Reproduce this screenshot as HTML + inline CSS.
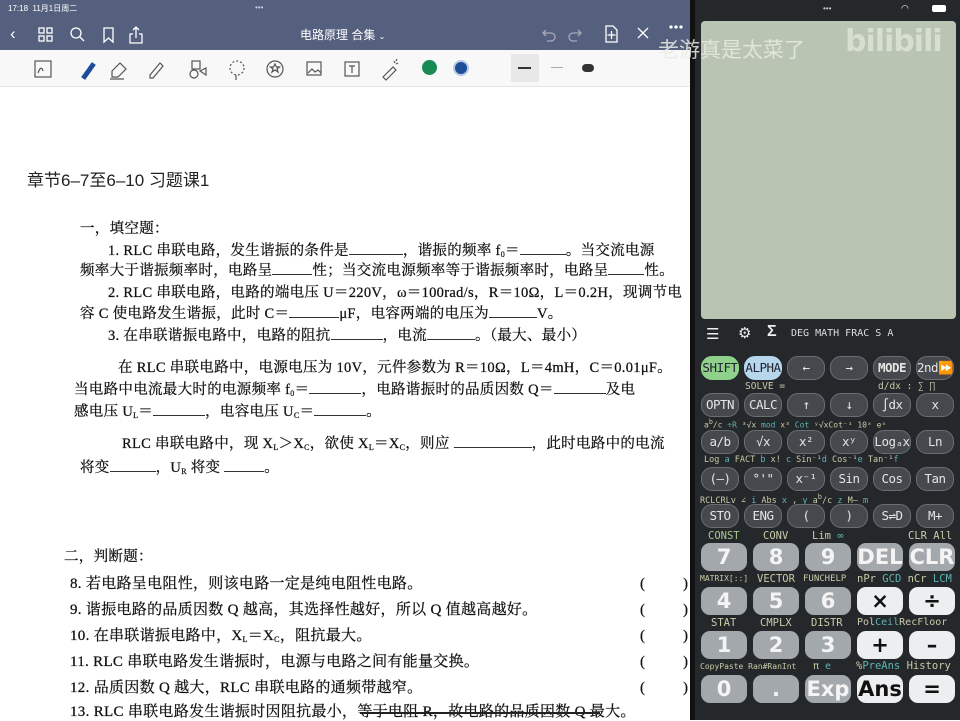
<!DOCTYPE html>
<html><head><meta charset="utf-8"><style>
*{margin:0;padding:0;box-sizing:border-box}
body{width:960px;height:720px;overflow:hidden;position:relative;background:#fff;font-family:"Liberation Sans","Noto Sans CJK SC",sans-serif}
.a{position:absolute;white-space:nowrap}
.t{position:absolute;white-space:nowrap;font:14.5px "Liberation Serif","Noto Serif CJK SC",serif;color:#111;letter-spacing:0.3px;line-height:18px;-webkit-text-stroke:0.25px #111}
.t sub{font-size:8px;line-height:0;vertical-align:-2px}
.u{display:inline-block;border-bottom:1px solid #333;height:12px;vertical-align:baseline}
.k{position:absolute;width:38px;height:24px;border-radius:11px;background:#45494d;border:1px solid #6a6e72;color:#e4e4e4;font:12.5px "DejaVu Sans Mono",monospace;text-align:center;line-height:22px;overflow:hidden;letter-spacing:-0.5px}
.n{position:absolute;width:46px;height:28px;border-radius:9px;background:#a3a8ad;color:#f4f4f4;font:bold 21px "DejaVu Sans",sans-serif;text-align:center;line-height:28px}
.o{background:#eceef0;color:#111}
.l{position:absolute;font:9.5px "DejaVu Sans Mono",monospace;color:#c9cba8;white-space:nowrap}
.c{color:#5fb3b3}
</style></head><body>
<div class="a" style="left:0;top:0;width:690px;height:50px;background:#55607f"></div>
<div class="a" style="left:8px;top:3px;font-size:8px;color:#fff">17:18 &nbsp;11月1日周二</div>
<div class="a" style="left:255px;top:3px;font-size:8px;color:#ccd">•••</div>
<div class="a" style="left:10px;top:24px;font-size:17px;color:#fff">‹</div>
<svg class="a" style="left:38px;top:26px" width="120" height="18" fill="none" stroke="#fff" stroke-width="1.3">
<rect x="1" y="2" width="5" height="5"/><rect x="9" y="2" width="5" height="5"/><rect x="1" y="10" width="5" height="5"/><rect x="9" y="10" width="5" height="5"/>
<circle cx="38" cy="7" r="5"/><path d="M42 11l4 4"/>
<path d="M66 2h9v14l-4.5-4-4.5 4z"/>
<path d="M95 8h-3v9h12v-9h-3M98 12V1M95 4l3-3 3 3"/></svg>
<div class="a" style="left:300px;top:26px;font-size:12px;color:#fff">电路原理 合集 <span style="font-size:8px">⌄</span></div>
<svg class="a" style="left:540px;top:24px" width="150" height="20" fill="none" stroke="#fff" stroke-width="1.3">
<path d="M6 6l-3 3 3 3M3 9h8a4 4 0 010 8H7" stroke="#aab"/><path d="M38 6l3 3-3 3M41 9h-8a4 4 0 000 8h4" stroke="#aab"/>
<path d="M66 2h7l4 4v12H66z M71.5 7v8M67.5 11h8"/><path d="M98 4l10 10M108 4L98 14"/><circle cx="131" cy="3" r="1" fill="#fff"/><circle cx="136" cy="3" r="1" fill="#fff"/><circle cx="141" cy="3" r="1" fill="#fff"/></svg>
<div class="a" style="left:0;top:50px;width:690px;height:37px;background:#f8f8f8;border-bottom:1px solid #e4e4e4"></div>
<svg class="a" style="left:30px;top:55px" width="580" height="28" fill="none" stroke="#555" stroke-width="1.2">
<rect x="5" y="6" width="16" height="16"/><path d="M8 18c2-6 4-6 5-2"/>
<path d="M52 22l10-14 3 2-10 14z" fill="#1e4c9a" stroke="#1e4c9a"/>
<path d="M82 16l8-8 6 6-8 8h-6z M80 24h14"/>
<path d="M120 20l10-12 3 3-10 12h-3z"/>
<rect x="162" y="6" width="8" height="8"/><circle cx="164" cy="19" r="4"/><path d="M170 16l6-3v7z"/>
<circle cx="207" cy="13" r="7" stroke-dasharray="2 2"/><path d="M206 20v5"/>
<circle cx="245" cy="14" r="8"/><path d="M245 9l1.5 3h3l-2.5 2 1 3-3-2-3 2 1-3-2.5-2h3z"/>
<rect x="277" y="7" width="14" height="13"/><path d="M278 18l4-4 3 3 3-2 3 3"/>
<rect x="315" y="7" width="14" height="14"/><path d="M319 11h6M322 11v7"/>
<path d="M353 22l10-10 3 3-10 10z M364 6l1 2M368 8l-2 1M367 4l-1 2"/></svg>
<div class="a" style="left:422px;top:60px;width:15px;height:15px;border-radius:50%;background:#178a55"></div>
<div class="a" style="left:453px;top:60px;width:16px;height:16px;border-radius:50%;background:#1f4e98;border:2px solid #b8c8e8"></div>
<div class="a" style="left:511px;top:54px;width:28px;height:28px;background:#e8e8e8"></div>
<div class="a" style="left:518px;top:67px;width:13px;height:2px;background:#333"></div>
<div class="a" style="left:551px;top:67px;width:12px;height:1px;background:#aaa"></div>
<div class="a" style="left:582px;top:64px;width:12px;height:8px;border-radius:4px;background:#333"></div>
<div class="a" style="left:27px;top:166px;font-size:17px;color:#222">章节6–7至6–10 习题课1</div>
<div class="t" style="left:80px;top:220px">一，填空题：</div>
<div class="t" style="left:108px;top:242px">1. RLC 串联电路，发生谐振的条件是<span class="u" style="width:54px"></span>，谐振的频率 f<sub>0</sub>＝<span class="u" style="width:46px"></span>。当交流电源</div>
<div class="t" style="left:80px;top:262px">频率大于谐振频率时，电路呈<span class="u" style="width:40px"></span>性；当交流电源频率等于谐振频率时，电路呈<span class="u" style="width:36px"></span>性。</div>
<div class="t" style="left:108px;top:284px">2. RLC 串联电路，电路的端电压 U＝220V，ω＝100rad/s，R＝10Ω，L＝0.2H，现调节电</div>
<div class="t" style="left:80px;top:305px">容 C 使电路发生谐振，此时 C＝<span class="u" style="width:50px"></span>μF，电容两端的电压为<span class="u" style="width:48px"></span>V。</div>
<div class="t" style="left:108px;top:327px">3. 在串联谐振电路中，电路的阻抗<span class="u" style="width:52px"></span>，电流<span class="u" style="width:48px"></span>。（最大、最小）</div>
<div class="t" style="left:118px;top:359px">在 RLC 串联电路中，电源电压为 10V，元件参数为 R＝10Ω，L＝4mH，C＝0.01μF。</div>
<div class="t" style="left:74px;top:381px">当电路中电流最大时的电源频率 f<sub>0</sub>＝<span class="u" style="width:52px"></span>，电路谐振时的品质因数 Q＝<span class="u" style="width:52px"></span>及电</div>
<div class="t" style="left:74px;top:403px">感电压 U<sub>L</sub>＝<span class="u" style="width:52px"></span>，电容电压 U<sub>C</sub>＝<span class="u" style="width:52px"></span>。</div>
<div class="t" style="left:122px;top:435px">RLC 串联电路中，现 X<sub>L</sub>＞X<sub>C</sub>，欲使 X<sub>L</sub>＝X<sub>C</sub>，则应 <span class="u" style="width:78px"></span>，此时电路中的电流</div>
<div class="t" style="left:80px;top:459px">将变<span class="u" style="width:46px"></span>，U<sub>R</sub> 将变 <span class="u" style="width:40px"></span>。</div>
<div class="t" style="left:64px;top:548px">二，判断题：</div>
<div class="t" style="left:70px;top:575px;font-size:15px">8. 若电路呈电阻性，则该电路一定是纯电阻性电路。</div>
<div class="t" style="left:70px;top:601px;font-size:15px">9. 谐振电路的品质因数 Q 越高，其选择性越好，所以 Q 值越高越好。</div>
<div class="t" style="left:70px;top:627px;font-size:15px">10. 在串联谐振电路中，X<sub>L</sub>＝X<sub>C</sub>，阻抗最大。</div>
<div class="t" style="left:70px;top:653px;font-size:15px">11. RLC 串联电路发生谐振时，电源与电路之间有能量交换。</div>
<div class="t" style="left:70px;top:679px;font-size:15px">12. 品质因数 Q 越大，RLC 串联电路的通频带越窄。</div>
<div class="t" style="left:70px;top:703px;font-size:15px">13. RLC 串联电路发生谐振时因阻抗最小，等于电阻 R，故电路的品质因数 Q 最大。</div>
<div class="a" style="left:360px;top:712px;width:240px;height:2px;background:#222"></div>
<div class="t" style="left:640px;top:575px;font-size:15px">(</div><div class="t" style="left:683px;top:575px;font-size:15px">)</div>
<div class="t" style="left:640px;top:601px;font-size:15px">(</div><div class="t" style="left:683px;top:601px;font-size:15px">)</div>
<div class="t" style="left:640px;top:627px;font-size:15px">(</div><div class="t" style="left:683px;top:627px;font-size:15px">)</div>
<div class="t" style="left:640px;top:653px;font-size:15px">(</div><div class="t" style="left:683px;top:653px;font-size:15px">)</div>
<div class="t" style="left:640px;top:679px;font-size:15px">(</div><div class="t" style="left:683px;top:679px;font-size:15px">)</div>
<div class="a" style="left:690px;top:0;width:270px;height:720px;background:#25282b"></div>
<div class="a" style="left:690px;top:0;width:5px;height:720px;background:#111"></div>
<div class="a" style="left:823px;top:4px;font-size:8px;color:#ccc">•••</div>
<div class="a" style="left:932px;top:5px;width:14px;height:7px;border:1px solid #fff;border-radius:2px;background:#fff"></div>
<div class="a" style="left:901px;top:3px;font-size:9px;color:#fff">◠</div>
<div class="a" style="left:701px;top:21px;width:255px;height:298px;background:#bac4b2;border-radius:4px"></div>
<div class="a" style="left:658px;top:34px;font-size:21px;color:#e8ece4;opacity:.85">老游真是太菜了</div>
<div class="a" style="left:845px;top:24px;font:bold 30px 'DejaVu Sans',sans-serif;color:#dde4d8;opacity:.85;letter-spacing:-1px">bilibili</div>
<div class="a" style="left:706px;top:325px;font-size:15px;color:#eee">☰</div>
<div class="a" style="left:738px;top:324px;font-size:15px;color:#eee">⚙</div>
<div class="a" style="left:767px;top:323px;font-size:16px;color:#eee;font-weight:bold">Σ</div>
<div class="a" style="left:791px;top:328px;font:10px 'DejaVu Sans Mono',monospace;color:#ddd">DEG MATH FRAC S A</div>
<div class="k" style="left:701px;top:356px;background:#8fd08a;color:#223;border-color:#8fd08a">SHIFT</div>
<div class="k" style="left:744px;top:356px;background:#b6d6ec;color:#223;border-color:#b6d6ec">ALPHA</div>
<div class="k" style="left:787px;top:356px">←</div>
<div class="k" style="left:830px;top:356px">→</div>
<div class="k" style="left:873px;top:356px;font-weight:bold">MODE</div>
<div class="k" style="left:916px;top:356px">2nd⏩</div>
<div class="l" style="left:745px;top:381px">SOLVE =</div><div class="l" style="left:878px;top:381px">d/dx : ∑  ∏</div>
<div class="k" style="left:701px;top:393px">OPTN</div><div class="k" style="left:744px;top:393px">CALC</div><div class="k" style="left:787px;top:393px">↑</div><div class="k" style="left:830px;top:393px">↓</div><div class="k" style="left:873px;top:393px">∫dx</div><div class="k" style="left:916px;top:393px">x</div>
<div class="l" style="left:704px;top:418px;font-size:8px">a<sup>b</sup>/c <span class="c">÷R</span> ³√x <span class="c">mod</span> x³ <span class="c">Cot</span> ʸ√xCot⁻¹  10ˣ   eˣ</div>
<div class="k" style="left:701px;top:430px">a/b</div><div class="k" style="left:744px;top:430px">√x</div><div class="k" style="left:787px;top:430px">x²</div><div class="k" style="left:830px;top:430px">xʸ</div><div class="k" style="left:873px;top:430px">Logₐx</div><div class="k" style="left:916px;top:430px">Ln</div>
<div class="l" style="left:704px;top:455px;font-size:8.5px">Log <span class="c">a</span> FACT <span class="c">b</span> x! <span class="c">c</span> Sin⁻¹<span class="c">d</span> Cos⁻¹<span class="c">e</span> Tan⁻¹<span class="c">f</span></div>
<div class="k" style="left:701px;top:467px">(–)</div><div class="k" style="left:744px;top:467px">°'"</div><div class="k" style="left:787px;top:467px">x⁻¹</div><div class="k" style="left:830px;top:467px">Sin</div><div class="k" style="left:873px;top:467px">Cos</div><div class="k" style="left:916px;top:467px">Tan</div>
<div class="l" style="left:700px;top:492px;font-size:8.5px">RCLCRLv ∠ <span class="c">i</span> Abs <span class="c">x</span> , <span class="c">y</span>  a<sup>b</sup>/c <span class="c">z</span> M– <span class="c">m</span></div>
<div class="k" style="left:701px;top:504px">STO</div><div class="k" style="left:744px;top:504px">ENG</div><div class="k" style="left:787px;top:504px">(</div><div class="k" style="left:830px;top:504px">)</div><div class="k" style="left:873px;top:504px">S⇌D</div><div class="k" style="left:916px;top:504px">M+</div>
<div class="l" style="left:708px;top:530px;font-size:10.5px;color:#a8c890">CONST</div><div class="l" style="left:763px;top:530px;font-size:10.5px">CONV</div><div class="l" style="left:812px;top:530px;font-size:10.5px">Lim <span class="c">∞</span></div><div class="l" style="left:908px;top:530px;font-size:10.5px">CLR All</div>
<div class="n" style="left:701px;top:543px">7</div><div class="n" style="left:753px;top:543px">8</div><div class="n" style="left:805px;top:543px">9</div><div class="n" style="left:857px;top:543px">DEL</div><div class="n" style="left:909px;top:543px">CLR</div>
<div class="l" style="left:700px;top:574px;font-size:8px">MATRIX[::]</div><div class="l" style="left:757px;top:573px;font-size:10.5px">VECTOR</div><div class="l" style="left:803px;top:574px;font-size:9px">FUNCHELP</div><div class="l" style="left:857px;top:573px;font-size:10.5px">nPr <span class="c">GCD</span> nCr <span class="c">LCM</span></div>
<div class="n" style="left:701px;top:587px">4</div><div class="n" style="left:753px;top:587px">5</div><div class="n" style="left:805px;top:587px">6</div><div class="n o" style="left:857px;top:587px">×</div><div class="n o" style="left:909px;top:587px">÷</div>
<div class="l" style="left:711px;top:617px;font-size:10.5px">STAT</div><div class="l" style="left:760px;top:617px;font-size:10.5px">CMPLX</div><div class="l" style="left:811px;top:617px;font-size:10.5px">DISTR</div><div class="l" style="left:857px;top:617px;font-size:10px">Pol<span class="c">Ceil</span>RecFloor</div>
<div class="n" style="left:701px;top:631px">1</div><div class="n" style="left:753px;top:631px">2</div><div class="n" style="left:805px;top:631px">3</div><div class="n o" style="left:857px;top:631px">+</div><div class="n o" style="left:909px;top:631px">–</div>
<div class="l" style="left:700px;top:662px;font-size:8px">CopyPaste Ran#RanInt</div><div class="l" style="left:813px;top:661px;font-size:10px">π <span class="c">e</span></div><div class="l" style="left:856px;top:660px;font-size:10.5px">%<span class="c">PreAns</span> History</div>
<div class="n" style="left:701px;top:675px">0</div><div class="n" style="left:753px;top:675px">.</div><div class="n" style="left:805px;top:675px">Exp</div><div class="n o" style="left:857px;top:675px">Ans</div><div class="n o" style="left:909px;top:675px">=</div>
</body></html>
